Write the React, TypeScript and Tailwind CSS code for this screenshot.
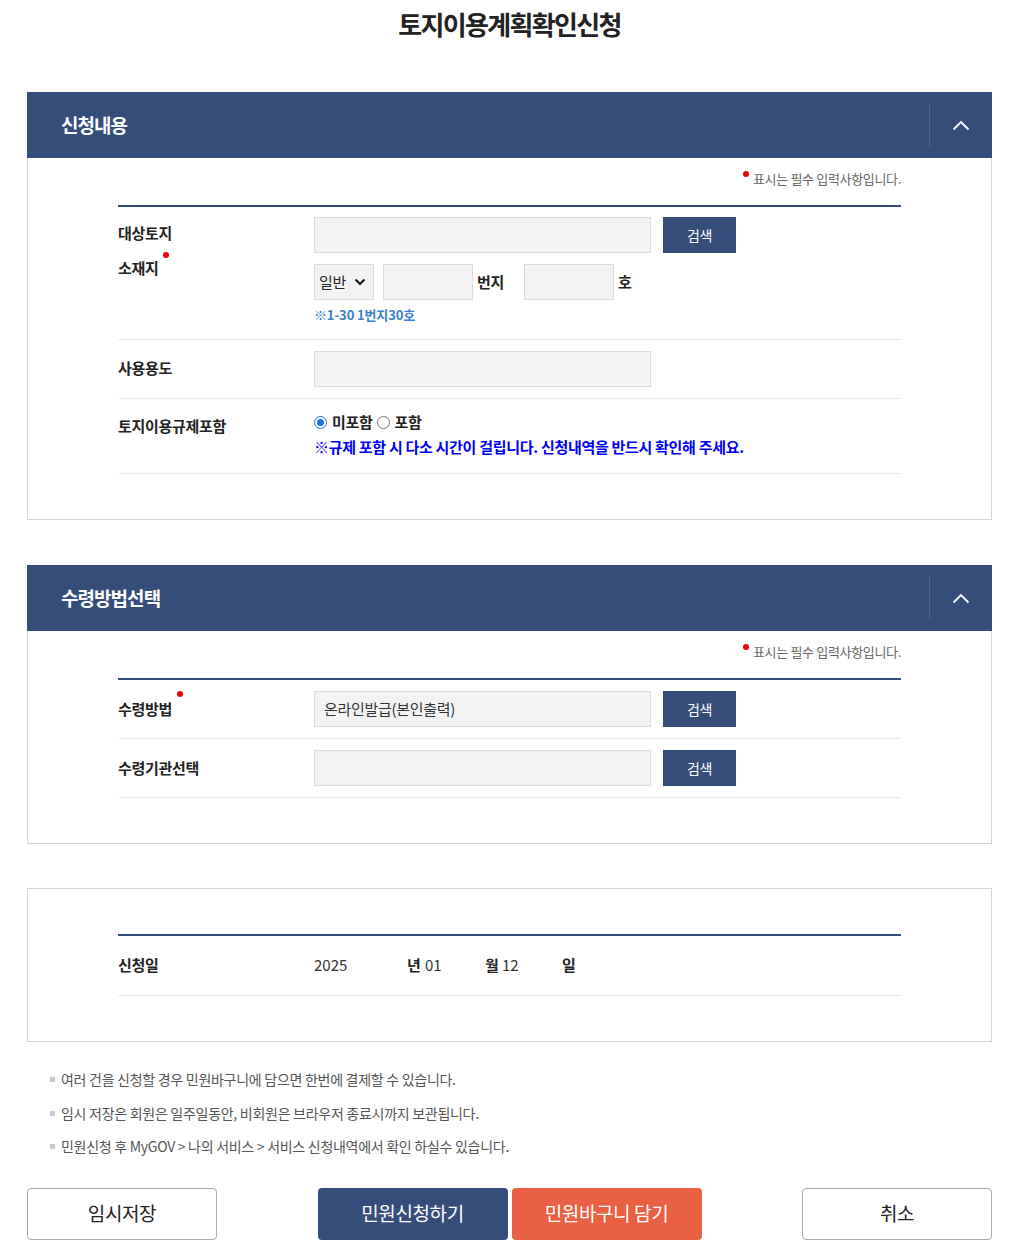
import React from "react";

const NAVY = "bg-[#344d7a]";

function Dot({ className = "" }: { className?: string }) {
  return <span className={`inline-block w-[6px] h-[6px] rounded-full bg-[#f00000] ${className}`} />;
}

function SectionHeader({ title }: { title: string }) {
  return (
    <div className={`${NAVY} h-[66px] flex items-center`}>
      <div className="flex-1 pl-[34px] text-white text-[19px] font-bold tracking-[-0.05em]">{title}</div>
      <div className="w-px h-[44px] bg-[#4a6390]" />
      <div className="w-[62px] flex items-center justify-center">
        <svg width="18" height="12" viewBox="0 0 18 12" fill="none">
          <path d="M1.5 10.5 L9 3 L16.5 10.5" stroke="white" strokeWidth="1.8" />
        </svg>
      </div>
    </div>
  );
}

function RequiredNote() {
  return (
    <div className="flex justify-end items-start h-[20px] mb-[16px]">
      <Dot className="mt-[2px] mr-[4px]" />
      <span className="text-[13px] text-[#666] tracking-[-0.025em] leading-[20px]">표시는 필수 입력사항입니다.</span>
    </div>
  );
}

function GrayInput({ w, children }: { w: string; children?: React.ReactNode }) {
  return (
    <div className={`${w} h-[36px] bg-[#f3f3f3] border border-[#dcdcdc] flex items-center pl-[9px] text-[15px] text-[#333] tracking-[-0.02em]`}>
      {children}
    </div>
  );
}

function SearchBtn() {
  return (
    <div className={`${NAVY} w-[73px] h-[36px] ml-[12px] flex items-center justify-center text-white text-[14px] tracking-[-0.02em]`}>
      검색
    </div>
  );
}

const LABEL = "w-[196px] text-[15px] font-bold tracking-[-0.02em] text-[#222]";

export default function App() {
  return (
    <div
      className="bg-white text-[#222] pl-[27px] pr-[18px] pb-[11px]"
      style={{ fontFamily: '"Noto Sans CJK KR", "Noto Sans", sans-serif' }}
    >
      <h1 className="text-center text-[26px] font-bold tracking-[-0.065em] leading-[34px] pt-[7px] mb-[51px] text-[#222]">
        토지이용계획확인신청
      </h1>

      {/* Section 1 */}
      <SectionHeader title="신청내용" />
      <div className="border border-t-0 border-[#d5d5d5] px-[90px] pt-[11px] pb-[45px]">
        <RequiredNote />
        <div className="border-t-2 border-[#344d7a]">
          {/* row 1 */}
          <div className="flex border-b border-[#e8e8e8] pt-[10px] pb-[16px]">
            <div className={`${LABEL} leading-[35px] -mt-[2px]`}>
              <div>대상토지</div>
              <div className="flex items-start">
                소재지
                <Dot className="mt-[2px] ml-[4px]" />
              </div>
            </div>
            <div className="flex flex-col">
              <div className="flex">
                <GrayInput w="w-[337px]" />
                <SearchBtn />
              </div>
              <div className="flex items-center mt-[11px]">
                <div className="w-[60px] h-[36px] bg-[#f3f3f3] border border-[#dcdcdc] flex items-center pl-[4px] text-[15px] text-[#222] tracking-[-0.02em]">
                  일반
                  <svg className="ml-[8px]" width="12" height="8" viewBox="0 0 12 8" fill="none">
                    <path d="M1.5 1.5 L6 6 L10.5 1.5" stroke="#111" strokeWidth="2" />
                  </svg>
                </div>
                <div className="w-[90px] h-[36px] ml-[9px] bg-[#f3f3f3] border border-[#dcdcdc]" />
                <span className="ml-[4px] w-[47px] text-[15px] font-bold tracking-[-0.02em]">번지</span>
                <div className="w-[90px] h-[36px] bg-[#f3f3f3] border border-[#dcdcdc]" />
                <span className="ml-[4px] text-[15px] font-bold">호</span>
              </div>
              <div className="mt-[7px] text-[13px] font-bold text-[#3b7fd0] tracking-[-0.01em] leading-[16px]">
                ※1-30 1번지30호
              </div>
            </div>
          </div>
          {/* row 2 */}
          <div className="flex items-center border-b border-[#e8e8e8] py-[11px]">
            <div className={`${LABEL} -mt-[2px]`}>사용용도</div>
            <GrayInput w="w-[337px]" />
          </div>
          {/* row 3 */}
          <div className="flex border-b border-[#e8e8e8] pt-[11px] pb-[13px]">
            <div className={`${LABEL} leading-[30px] pt-[1px]`}>토지이용규제포함</div>
            <div className="flex flex-col">
              <div className="flex items-center h-[25px] text-[15px] font-bold tracking-[-0.02em]">
                <span className="w-[13px] h-[13px] rounded-full border border-[#1a73e8] flex items-center justify-center mr-[5px]">
                  <span className="w-[7px] h-[7px] rounded-full bg-[#1a73e8]" />
                </span>
                미포함
                <span className="w-[13px] h-[13px] rounded-full border border-[#777] ml-[4px] mr-[5px]" />
                포함
              </div>
              <div className="h-[25px] flex items-center text-[15px] font-bold text-[#0000ff] tracking-[-0.02em]">
                ※규제 포함 시 다소 시간이 걸립니다. 신청내역을 반드시 확인해 주세요.
              </div>
            </div>
          </div>
        </div>
      </div>

      {/* Section 2 */}
      <div className="mt-[45px]">
        <SectionHeader title="수령방법선택" />
        <div className="border border-t-0 border-[#d5d5d5] px-[90px] pt-[11px] pb-[45px]">
          <RequiredNote />
          <div className="border-t-2 border-[#344d7a]">
            <div className="flex items-center border-b border-[#e8e8e8] py-[11px]">
              <div className={`${LABEL} flex items-start`}>
                수령방법
                <Dot className="-mt-[7px] ml-[5px]" />
              </div>
              <GrayInput w="w-[337px]">온라인발급(본인출력)</GrayInput>
              <SearchBtn />
            </div>
            <div className="flex items-center border-b border-[#e8e8e8] py-[11px]">
              <div className={LABEL}>수령기관선택</div>
              <GrayInput w="w-[337px]" />
              <SearchBtn />
            </div>
          </div>
        </div>
      </div>

      {/* Section 3 */}
      <div className="mt-[44px] border border-[#d5d5d5] px-[90px] pt-[45px] pb-[45px]">
        <div className="border-t-2 border-[#344d7a]">
          <div className="flex items-center h-[60px] border-b border-[#e8e8e8] text-[15px]">
            <div className={LABEL}>신청일</div>
            <span className="w-[93px] text-[#333]">2025</span>
            <span className="w-[18px] font-bold">년</span>
            <span className="w-[60px] text-[#333]">01</span>
            <span className="w-[17px] font-bold">월</span>
            <span className="w-[60px] text-[#333]">12</span>
            <span className="font-bold">일</span>
          </div>
        </div>
      </div>

      {/* Notes */}
      <ul className="mt-[21px] pl-[23px] text-[14px] text-[#555] tracking-[-0.02em]">
        {[
          "여러 건을 신청할 경우 민원바구니에 담으면 한번에 결제할 수 있습니다.",
          "임시 저장은 회원은 일주일동안, 비회원은 브라우저 종료시까지 보관됩니다.",
          "민원신청 후 MyGOV > 나의 서비스 > 서비스 신청내역에서 확인 하실수 있습니다.",
        ].map((t) => (
          <li key={t} className="flex items-center h-[33.5px]">
            <span className="w-[5px] h-[5px] bg-[#c8c8c8] mr-[6px]" />
            {t}
          </li>
        ))}
      </ul>

      {/* Buttons */}
      <div className="mt-[24px] flex items-center text-[19px] tracking-[-0.02em]">
        <div className="w-[190px] h-[52px] border border-[#aaa] rounded-[4px] flex items-center justify-center text-[#222]">
          임시저장
        </div>
        <div className="flex-1 flex justify-center gap-[4px]">
          <div className={`w-[190px] h-[52px] ${NAVY} rounded-[4px] flex items-center justify-center text-white`}>
            민원신청하기
          </div>
          <div className="w-[190px] h-[52px] bg-[#ea6042] rounded-[4px] flex items-center justify-center text-white">
            민원바구니 담기
          </div>
        </div>
        <div className="w-[190px] h-[52px] border border-[#aaa] rounded-[4px] flex items-center justify-center text-[#222]">
          취소
        </div>
      </div>
    </div>
  );
}
